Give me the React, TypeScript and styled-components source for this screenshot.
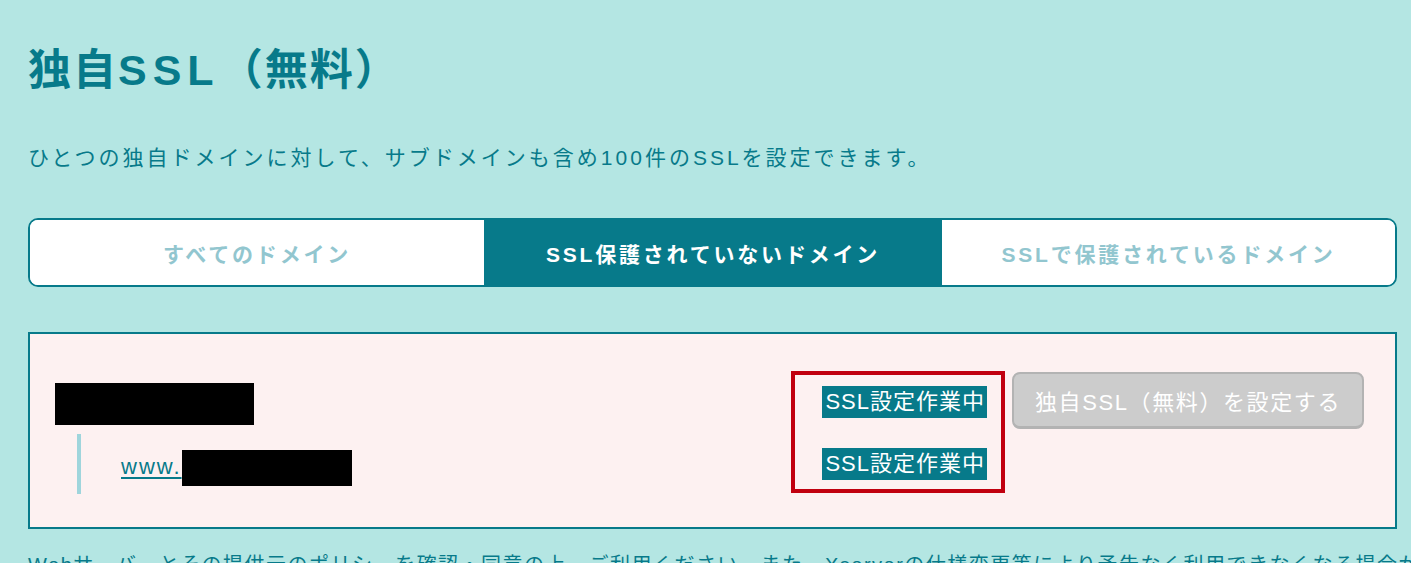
import React from 'react'
import styled, { createGlobalStyle } from 'styled-components';

const teal = '#077a8a';
const fontStack = '"Liberation Sans", "Noto Sans CJK JP", sans-serif';

const GlobalStyle = createGlobalStyle`
  html, body {
    margin: 0;
    padding: 0;
    background: #b4e6e3;
    overflow: hidden;
  }
  body {
    font-family: ${fontStack};
    color: ${teal};
  }
`;

const tabs = ['すべてのドメイン', 'SSL保護されていないドメイン', 'SSLで保護されているドメイン'];

const App: React.FC = () => {
  return (
    <Page>
      <GlobalStyle />
      <Title>独自<Latin>SSL</Latin>（無料）</Title>
      <Lead>ひとつの独自ドメインに対して、サブドメインも含め100件のSSLを設定できます。</Lead>
      <TabBar>
        {tabs.map((t, i) => (
          <Tab key={t} active={i === 1}>{t}</Tab>
        ))}
      </TabBar>
      <Panel>
        <DomainColumn>
          <Redacted w={199} h={42} />
          <SubRow>
            <SubLink href="#">www.</SubLink>
            <Redacted w={170} h={36} shift={4} />
          </SubRow>
        </DomainColumn>
        <StatusBox>
          <Badge>SSL設定作業中</Badge>
          <Badge>SSL設定作業中</Badge>
        </StatusBox>
        <SetupButton disabled>独自SSL（無料）を設定する</SetupButton>
      </Panel>
      <Note>
        Webサーバーとその提供元のポリシーを確認・同意の上、ご利用ください。また、Xserverの仕様変更等により予告なく利用できなくなる場合があります。
      </Note>
    </Page>
  );
}

const Page = styled.div`
  padding: 0 14px 0 28px;
  height: 563px;
  overflow: hidden;
`;

const Title = styled.h1`
  margin: 0;
  padding-top: 38px;
  font-size: 43px;
  line-height: 64px;
  font-weight: 700;
  letter-spacing: 2px;
  color: ${teal};
`;

const Latin = styled.span`
  letter-spacing: 6px;
`;

const Lead = styled.p`
  margin: 41px 0 0;
  font-size: 21px;
  line-height: 30px;
  letter-spacing: 3px;
  color: ${teal};
`;

const TabBar = styled.div`
  margin-top: 45px;
  display: grid;
  grid-template-columns: 454px 458px 1fr;
  height: 69px;
  box-sizing: border-box;
  border: 2px solid ${teal};
  border-radius: 10px;
  overflow: hidden;
  background: #fff;
`;

const Tab = styled.div<{ active?: boolean }>`
  display: flex;
  align-items: center;
  justify-content: center;
  font-size: 21px;
  font-weight: 700;
  letter-spacing: 2.8px;
  background: ${p => (p.active ? teal : '#fff')};
  color: ${p => (p.active ? '#fff' : '#92c6cf')};
`;

const Panel = styled.div`
  margin-top: 45px;
  height: 197px;
  box-sizing: border-box;
  border: 2px solid ${teal};
  background: #fdf1f1;
  display: flex;
  align-items: flex-start;
  padding: 37px 31px 0 25px;
`;

const DomainColumn = styled.div`
  flex: 1;
  padding-top: 12px;
`;

const Redacted = styled.span<{ w: number; h: number; shift?: number }>`
  display: inline-block;
  width: ${p => p.w}px;
  height: ${p => p.h}px;
  background: #000;
  vertical-align: top;
  position: relative;
  top: ${p => p.shift || 0}px;
`;

const SubRow = styled.div`
  margin: 9px 0 0 22px;
  height: 60px;
  border-left: 4px solid #9fd5dc;
  padding-left: 40px;
  display: flex;
  align-items: center;
`;

const SubLink = styled.a`
  font-size: 22px;
  color: ${teal};
  letter-spacing: 2px;
  text-decoration: underline;
  text-underline-offset: 3px;
  line-height: 36px;
  margin-top: 6px;
`;

const StatusBox = styled.div`
  width: 214px;
  height: 122px;
  box-sizing: border-box;
  border: 4px solid #c1000f;
  display: flex;
  flex-direction: column;
  align-items: flex-end;
  gap: 30px;
  padding: 11px 14px 0 0;
`;

const Badge = styled.span`
  display: inline-block;
  background: ${teal};
  color: #fff;
  font-size: 22px;
  line-height: 32px;
  letter-spacing: 1px;
  padding: 0 2px 0 3px;
  white-space: nowrap;
`;

const SetupButton = styled.button`
  margin-left: 7px;
  margin-top: 1px;
  width: 352px;
  height: 57px;
  box-sizing: border-box;
  background: #cccccc;
  border: 2px solid #b3b3b3;
  border-bottom-width: 3px;
  border-radius: 8px;
  color: #fff;
  font-family: ${fontStack};
  font-size: 22px;
  letter-spacing: 1.6px;
  padding: 0;
`;

const Note = styled.p`
  margin: 20px 0 0;
  font-size: 20px;
  line-height: 32px;
  letter-spacing: 1.5px;
  white-space: nowrap;
  color: ${teal};
`;

export default App;
